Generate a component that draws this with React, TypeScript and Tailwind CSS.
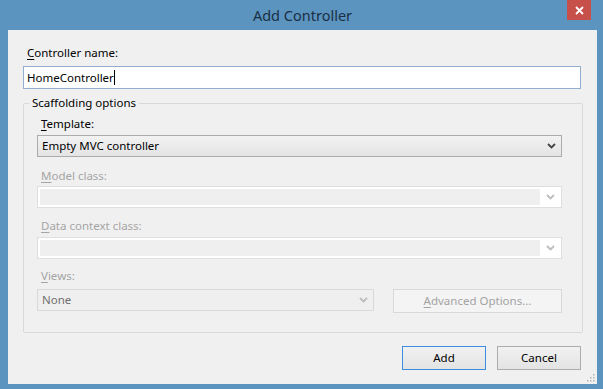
import React from "react";

const Chevron = ({ color }: { color: string }) => (
  <svg width="9" height="6" viewBox="0 0 9 6" className="block">
    <path d="M1 1 L4.5 4.5 L8 1" fill="none" stroke={color} strokeWidth="1.8" />
  </svg>
);

const Label = ({ u, rest, disabled }: { u: string; rest: string; disabled?: boolean }) => (
  <div className={`h-[16px] leading-[16px] pl-[4px] ${disabled ? "text-[#a5a5a5]" : "text-[#000]"}`}>
    <span className="underline underline-offset-[2px] decoration-[1px]">{u}</span>
    {rest}
  </div>
);

const DisabledCombo = () => (
  <div className="h-[22px] w-[525px] border border-[#dedede] bg-white flex p-[1px]">
    <div className="flex-1 bg-[#efefef] border border-white" />
    <div className="w-[19px] flex items-center justify-center">
      <Chevron color="#bdbdbd" />
    </div>
  </div>
);

export default function App() {
  return (
    <div
      className="w-[603px] h-[389px] bg-[#5b94bf] flex flex-col overflow-hidden text-[11.5px]"
      style={{ fontFamily: '"Noto Sans", "Segoe UI", sans-serif' }}
    >
      <div className="h-[30px] relative flex items-center justify-center shrink-0">
        <span className="text-[14.5px] text-[#1a2f45] leading-[20px] pl-[2px]">Add Controller</span>
        <div className="absolute left-[567px] top-0 w-[24px] h-[20px] bg-[#c7504b] flex items-center justify-center">
          <svg width="9" height="9" viewBox="0 0 9 9">
            <path d="M1 1 L8 8 M8 1 L1 8" stroke="#ffffff" strokeWidth="1.8" />
          </svg>
        </div>
      </div>
      <div className="ml-[8px] w-[589px] h-[354px] bg-[#f0f0f0] relative pl-[15px] pt-[15px] shrink-0">
        <Label u="C" rest="ontroller name:" />
        <div className="mt-[5px] w-[558px] h-[23px] border border-[#93afd0] bg-white flex items-center pl-[3px]">
          <span className="leading-[16px] text-black">HomeController</span>
          <span className="w-[1px] h-[15px] bg-black" />
        </div>
        <fieldset className="mt-[7px] w-[560px] border border-[#d9d9d9] rounded-[2px] p-0 pb-[19px]">
          <legend className="ml-[5px] px-[3px] leading-[14px] h-[14px] text-black">Scaffolding options</legend>
          <div className="pl-[13px]">
            <div className="mt-[6px]">
              <Label u="T" rest="emplate:" />
            </div>
            <div className="mt-[3px] h-[22px] w-[525px] border border-[#acacac] bg-gradient-to-b from-[#f2f2f2] to-[#e4e4e4] flex items-center pl-[4px] pr-[5px]">
              <span className="flex-1 leading-[16px] text-black">Empty MVC controller</span>
              <Chevron color="#444444" />
            </div>
            <div className="mt-[11px]">
              <Label u="M" rest="odel class:" disabled />
            </div>
            <div className="mt-[2px]">
              <DisabledCombo />
            </div>
            <div className="mt-[10px]">
              <Label u="D" rest="ata context class:" disabled />
            </div>
            <div className="mt-[3px]">
              <DisabledCombo />
            </div>
            <div className="mt-[9px]">
              <Label u="V" rest="iews:" disabled />
            </div>
            <div className="mt-[5px] flex items-start">
              <div className="h-[22px] w-[337px] border border-[#d9d9d9] bg-[#efefef] flex items-center pl-[4px] pr-[5px]">
                <span className="flex-1 leading-[16px] text-[#707070]">None</span>
                <Chevron color="#bdbdbd" />
              </div>
              <div className="ml-[19px] h-[24px] w-[169px] border border-[#d9d9d9] bg-[#f4f4f4] flex items-center justify-center text-[#a3a3a3] leading-[16px]">
                <span>
                  <span className="underline underline-offset-[2px]">A</span>dvanced Options...
                </span>
              </div>
            </div>
          </div>
        </fieldset>
        <div className="mt-[13px] w-[558px] flex justify-end gap-[11px]">
          <div className="w-[84px] h-[24px] border border-[#3c8ce0] bg-gradient-to-b from-[#f1f1f1] to-[#e3e3e3] flex items-center justify-center text-black leading-[16px]">
            Add
          </div>
          <div className="w-[84px] h-[24px] border border-[#acacac] bg-gradient-to-b from-[#f1f1f1] to-[#e3e3e3] flex items-center justify-center text-black leading-[16px]">
            Cancel
          </div>
        </div>
        <svg className="absolute right-[2px] bottom-[2px]" width="8" height="8" viewBox="0 0 8 8">
          <rect x="6" y="0" width="1.5" height="1.5" fill="#b5b5b5" />
          <rect x="3" y="3" width="1.5" height="1.5" fill="#b5b5b5" />
          <rect x="6" y="3" width="1.5" height="1.5" fill="#b5b5b5" />
          <rect x="0" y="6" width="1.5" height="1.5" fill="#b5b5b5" />
          <rect x="3" y="6" width="1.5" height="1.5" fill="#b5b5b5" />
          <rect x="6" y="6" width="1.5" height="1.5" fill="#b5b5b5" />
        </svg>
      </div>
    </div>
  );
}
